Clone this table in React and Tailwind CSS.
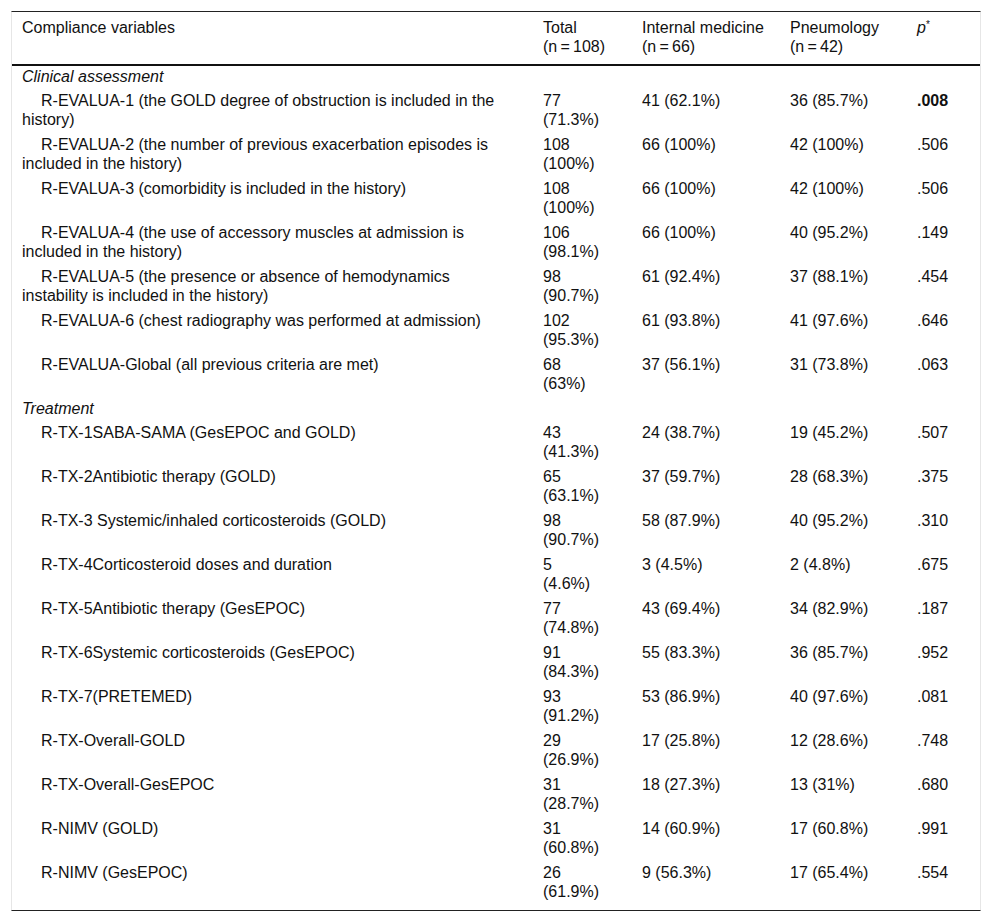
const clinical = [
  ['R-EVALUA-1 (the GOLD degree of obstruction is included in the history)', '77', '(71.3%)', '41 (62.1%)', '36 (85.7%)', '.008', true],
  ['R-EVALUA-2 (the number of previous exacerbation episodes is included in the history)', '108', '(100%)', '66 (100%)', '42 (100%)', '.506'],
  ['R-EVALUA-3 (comorbidity is included in the history)', '108', '(100%)', '66 (100%)', '42 (100%)', '.506'],
  ['R-EVALUA-4 (the use of accessory muscles at admission is included in the history)', '106', '(98.1%)', '66 (100%)', '40 (95.2%)', '.149'],
  ['R-EVALUA-5 (the presence or absence of hemodynamics instability is included in the history)', '98', '(90.7%)', '61 (92.4%)', '37 (88.1%)', '.454'],
  ['R-EVALUA-6 (chest radiography was performed at admission)', '102', '(95.3%)', '61 (93.8%)', '41 (97.6%)', '.646'],
  ['R-EVALUA-Global (all previous criteria are met)', '68', '(63%)', '37 (56.1%)', '31 (73.8%)', '.063'],
];

const treatment = [
  ['R-TX-1SABA-SAMA (GesEPOC and GOLD)', '43', '(41.3%)', '24 (38.7%)', '19 (45.2%)', '.507'],
  ['R-TX-2Antibiotic therapy (GOLD)', '65', '(63.1%)', '37 (59.7%)', '28 (68.3%)', '.375'],
  ['R-TX-3 Systemic/inhaled corticosteroids (GOLD)', '98', '(90.7%)', '58 (87.9%)', '40 (95.2%)', '.310'],
  ['R-TX-4Corticosteroid doses and duration', '5', '(4.6%)', '3 (4.5%)', '2 (4.8%)', '.675'],
  ['R-TX-5Antibiotic therapy (GesEPOC)', '77', '(74.8%)', '43 (69.4%)', '34 (82.9%)', '.187'],
  ['R-TX-6Systemic corticosteroids (GesEPOC)', '91', '(84.3%)', '55 (83.3%)', '36 (85.7%)', '.952'],
  ['R-TX-7(PRETEMED)', '93', '(91.2%)', '53 (86.9%)', '40 (97.6%)', '.081'],
  ['R-TX-Overall-GOLD', '29', '(26.9%)', '17 (25.8%)', '12 (28.6%)', '.748'],
  ['R-TX-Overall-GesEPOC', '31', '(28.7%)', '18 (27.3%)', '13 (31%)', '.680'],
  ['R-NIMV (GOLD)', '31', '(60.8%)', '14 (60.9%)', '17 (60.8%)', '.991'],
  ['R-NIMV (GesEPOC)', '26', '(61.9%)', '9 (56.3%)', '17 (65.4%)', '.554'],
];

const Section = ({ title }) => (
  <tr>
    <td colSpan={5} className="pl-[10px] pt-[1px] pb-[4px] italic">{title}</td>
  </tr>
);

const Row = ({ r, last }) => {
  const [label, n, pct, im, pn, p, bold] = r;
  const pad = last ? 'pt-[1px] pb-[9px]' : 'pt-[1px] pb-[5px]';
  return (
    <tr className="align-top">
      <td className={`pl-[10px] pr-[20px] indent-[19px] ${pad}`}>{label}</td>
      <td className={`pl-[10px] ${pad}`}>{n}<br />{pct}</td>
      <td className={`pl-[10px] ${pad}`}>{im}</td>
      <td className={`pl-[10px] ${pad}`}>{pn}</td>
      <td className={`pl-[10px] ${pad} ${bold ? 'font-bold' : ''}`}>{p}</td>
    </tr>
  );
};

export default function App() {
  return (
    <div className="min-h-[923px] bg-white pt-[11px] px-[11px] text-[16px] leading-[19px] text-[#111]" style={{ fontFamily: '"Liberation Sans", Arial, sans-serif' }}>
      <div className="w-[970px] border-t border-b border-t-[#222] border-b-[#222] border-x border-x-[#e6e6e6]">
        <table className="table-fixed border-collapse w-full">
          <colgroup>
            <col className="w-[521px]" />
            <col className="w-[99px]" />
            <col className="w-[148px]" />
            <col className="w-[127px]" />
            <col className="w-[73px]" />
          </colgroup>
          <thead>
            <tr className="align-top border-b-2 border-b-[#111] text-left">
              <th className="font-normal pl-[10px] pt-[6px] pb-[8px]">Compliance variables</th>
              <th className="font-normal pl-[10px] pt-[6px] pb-[8px]">Total<br />(n{'\u2009'}={'\u2009'}108)</th>
              <th className="font-normal pl-[10px] pt-[6px] pb-[8px]">Internal medicine<br />(n{'\u2009'}={'\u2009'}66)</th>
              <th className="font-normal pl-[10px] pt-[6px] pb-[8px]">Pneumology<br />(n{'\u2009'}={'\u2009'}42)</th>
              <th className="font-normal pl-[10px] pt-[6px] pb-[8px]"><i>p</i><sup className="text-[10px]">*</sup></th>
            </tr>
          </thead>
          <tbody>
            <Section title="Clinical assessment" />
            {clinical.map((r) => <Row key={r[0]} r={r} />)}
            <Section title="Treatment" />
            {treatment.map((r, i) => <Row key={r[0]} r={r} last={i === treatment.length - 1} />)}
          </tbody>
        </table>
      </div>
    </div>
  );
}
